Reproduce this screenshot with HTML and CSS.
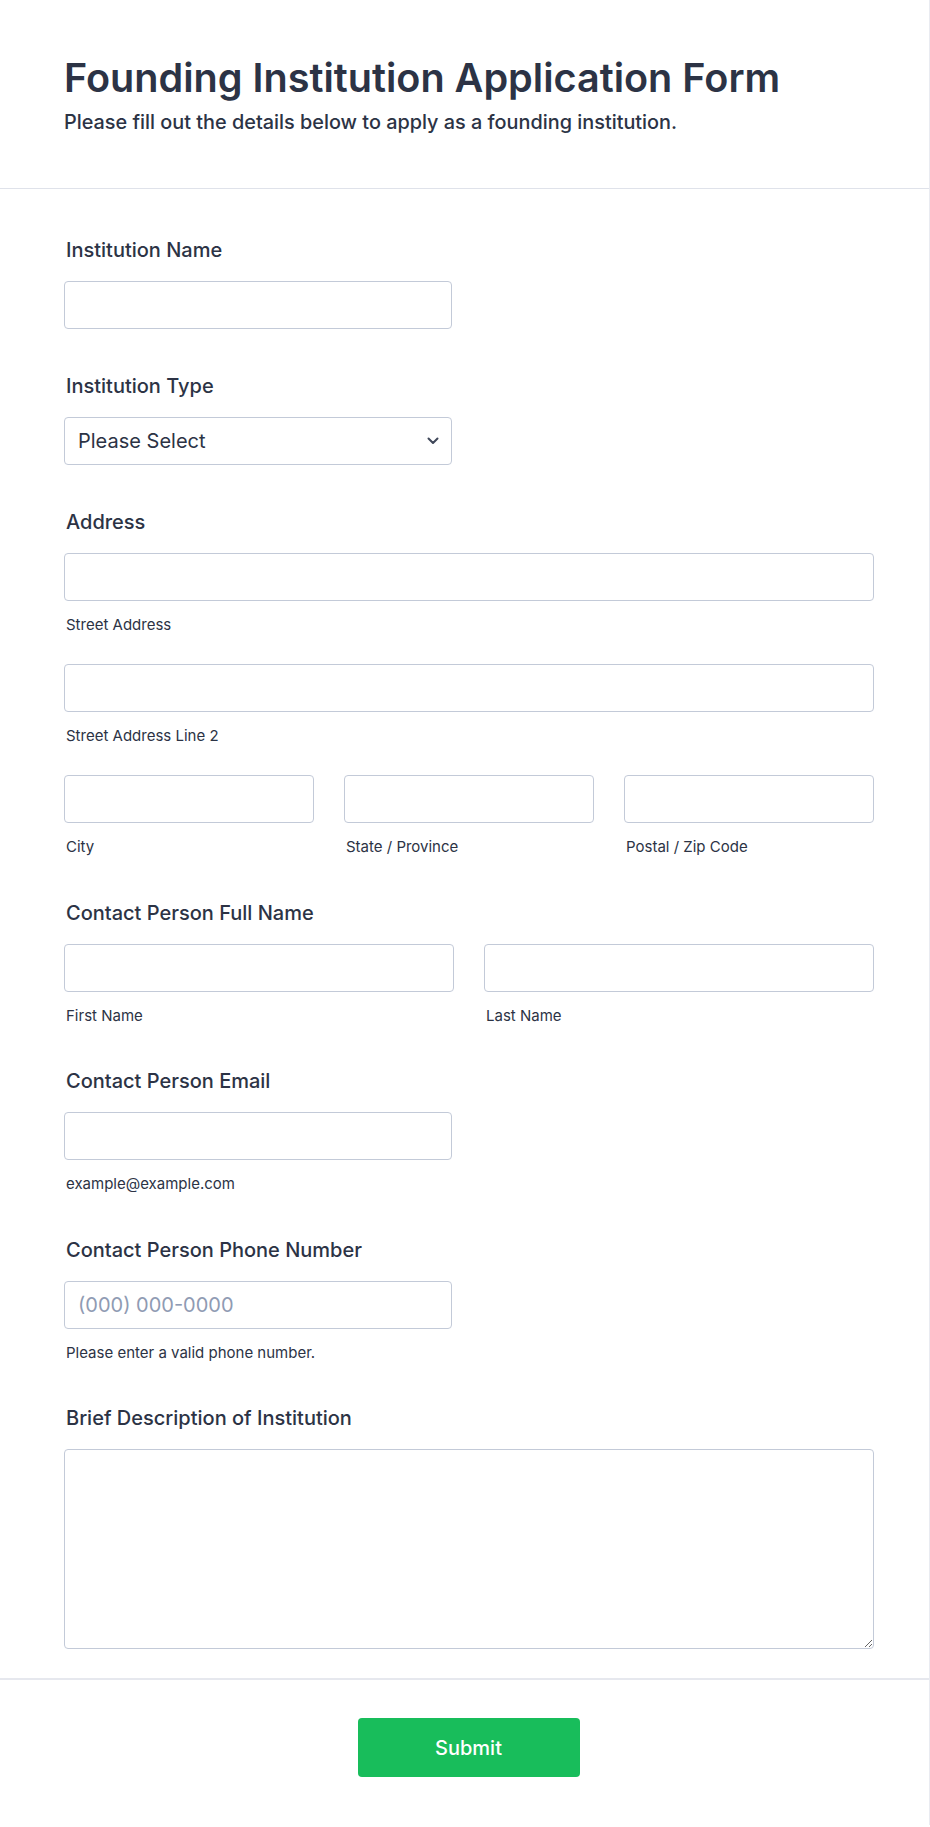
FILE: index.html
```html
<!DOCTYPE html>
<html lang="en">
<head>
<meta charset="utf-8">
<title>Founding Institution Application Form</title>
<link rel="stylesheet" href="styles.css">
</head>
<body>
<div class="form">
  <header class="form-header">
    <h1 class="form-title">Founding Institution Application Form</h1>
    <p class="form-subtitle">Please fill out the details below to apply as a founding institution.</p>
  </header>

  <div class="fields">
    <div class="field">
      <label class="label">Institution Name</label>
      <input class="input input-md" type="text">
    </div>

    <div class="field">
      <label class="label">Institution Type</label>
      <div class="select-wrap input-md">
        <select class="input select">
          <option>Please Select</option>
        </select>
        <svg class="chevron" width="12" height="8" viewBox="0 0 12 8"><path d="M1.5 1.5 6 6l4.5-4.5" fill="none" stroke="#3f4759" stroke-width="2" stroke-linecap="round" stroke-linejoin="round"/></svg>
      </div>
    </div>

    <div class="field">
      <label class="label">Address</label>
      <div class="address">
        <div class="sub">
          <input class="input" type="text">
          <span class="sublabel">Street Address</span>
        </div>
        <div class="sub">
          <input class="input" type="text">
          <span class="sublabel">Street Address Line 2</span>
        </div>
        <div class="row3">
          <div class="sub">
            <input class="input" type="text">
            <span class="sublabel">City</span>
          </div>
          <div class="sub">
            <input class="input" type="text">
            <span class="sublabel">State / Province</span>
          </div>
          <div class="sub">
            <input class="input" type="text">
            <span class="sublabel">Postal / Zip Code</span>
          </div>
        </div>
      </div>
    </div>

    <div class="field">
      <label class="label">Contact Person Full Name</label>
      <div class="row2">
        <div class="sub">
          <input class="input" type="text">
          <span class="sublabel">First Name</span>
        </div>
        <div class="sub">
          <input class="input" type="text">
          <span class="sublabel">Last Name</span>
        </div>
      </div>
    </div>

    <div class="field">
      <label class="label">Contact Person Email</label>
      <div class="sub input-md">
        <input class="input" type="email">
        <span class="sublabel">example@example.com</span>
      </div>
    </div>

    <div class="field">
      <label class="label">Contact Person Phone Number</label>
      <div class="sub input-md">
        <input class="input" type="tel" placeholder="(000) 000-0000">
        <span class="sublabel">Please enter a valid phone number.</span>
      </div>
    </div>

    <div class="field">
      <label class="label">Brief Description of Institution</label>
      <textarea class="input textarea"></textarea>
    </div>
  </div>

  <div class="footer">
    <button class="submit" type="button">Submit</button>
  </div>
</div>
</body>
</html>
```

FILE: styles.css
```css
* { box-sizing: border-box; }

html, body {
  margin: 0;
  padding: 0;
  background: #ffffff;
}

body {
  font-family: Inter, "Noto Sans", "Liberation Sans", sans-serif;
  color: #2c3345;
}

.form {
  width: 930px;
  border-right: 1px solid #e9ebf1;
}

.form-header {
  padding: 54px 64px 51px;
  border-bottom: 1px solid #dfe2ea;
}

.form-title {
  margin: 0;
  font-size: 39.6px;
  line-height: 48px;
  font-weight: 600;
  color: #2c3345;
}

.form-subtitle {
  margin: 5px 0 0;
  font-size: 19.85px;
  line-height: 30px;
  font-weight: 500;
  color: #2c3345;
}

.fields {
  padding: 46px 55px 29px 64px;
  display: flex;
  flex-direction: column;
  gap: 42px;
}

.field {
  display: flex;
  flex-direction: column;
}

.label {
  font-size: 20px;
  line-height: 30px;
  font-weight: 500;
  color: #2c3345;
  margin: 0 0 16px 2px;
}

.input {
  display: block;
  width: 100%;
  height: 48px;
  margin: 0;
  padding: 0 13px;
  border: 1px solid #c3cad8;
  border-radius: 4px;
  background: #ffffff;
  font-family: Inter, "Noto Sans", "Liberation Sans", sans-serif;
  font-size: 20px;
  color: #2c3345;
  outline: none;
}

.input::placeholder {
  color: #8f9bb3;
}

.input-md {
  width: 388px;
}

.select-wrap {
  position: relative;
}

.select {
  appearance: none;
  -webkit-appearance: none;
  padding-right: 36px;
}

.chevron {
  position: absolute;
  right: 13px;
  top: 20px;
  pointer-events: none;
}

.address {
  display: flex;
  flex-direction: column;
  gap: 30.5px;
}

.sub {
  display: flex;
  flex-direction: column;
}

.sublabel {
  margin: 15px 0 0 2px;
  font-size: 15px;
  line-height: 17.5px;
  color: #2c3345;
}

.row3 {
  display: grid;
  grid-template-columns: repeat(3, 1fr);
  column-gap: 30px;
}

.row2 {
  display: grid;
  grid-template-columns: repeat(2, 1fr);
  column-gap: 30px;
}

.textarea {
  height: 200px;
  padding: 10px 13px;
  resize: both;
}

.footer {
  border-top: 2px solid #e6e8ee;
  padding: 38px 56px 48px 64px;
  display: flex;
  justify-content: center;
}

.submit {
  width: 222px;
  height: 59px;
  border: none;
  border-radius: 4px;
  background: #18bd5b;
  color: #ffffff;
  font-family: Inter, "Noto Sans", "Liberation Sans", sans-serif;
  font-size: 20px;
  font-weight: 500;
  cursor: pointer;
}
```
